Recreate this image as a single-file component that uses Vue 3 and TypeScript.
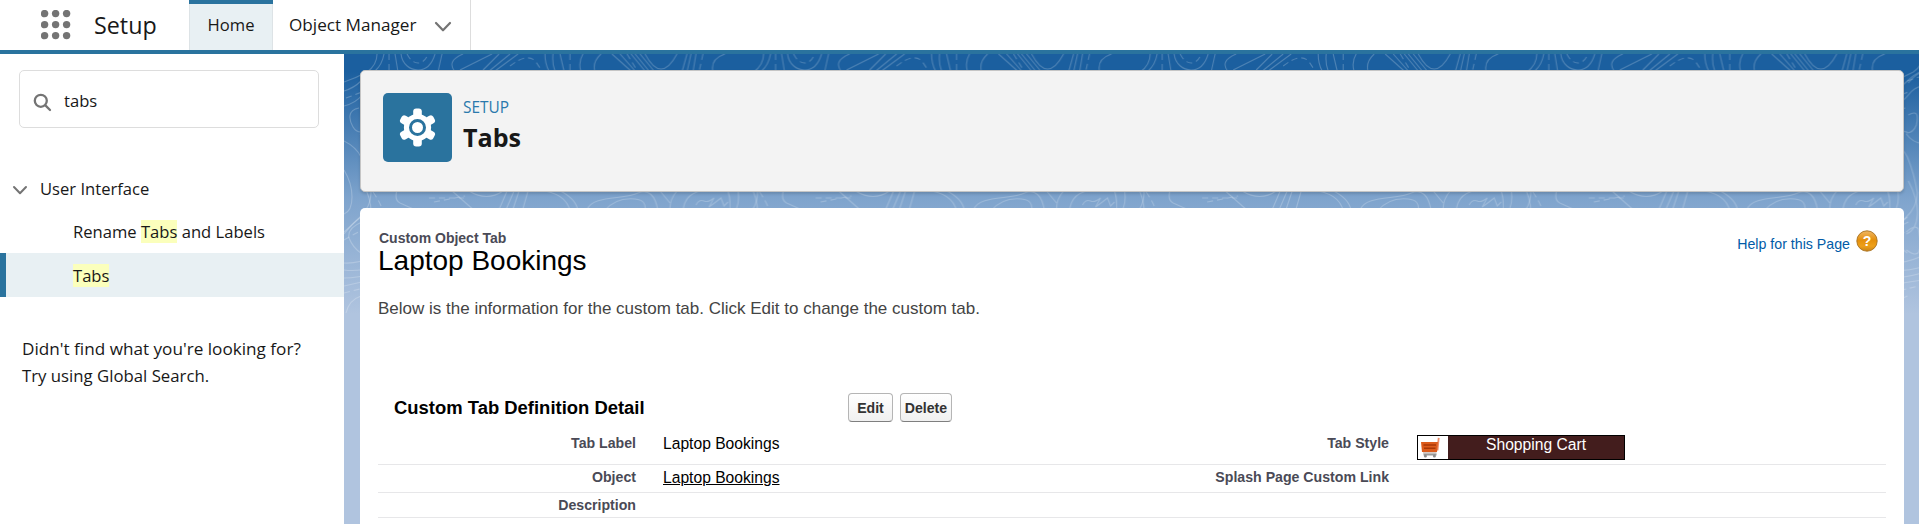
<script setup lang="ts">
interface Row {
  label: string
  value?: string
  link?: boolean
  rightLabel?: string
  style?: string
}

const rows: Row[] = [
  { label: 'Tab Label', value: 'Laptop Bookings', rightLabel: 'Tab Style', style: 'Shopping Cart' },
  { label: 'Object', value: 'Laptop Bookings', link: true, rightLabel: 'Splash Page Custom Link' },
  { label: 'Description' },
]
const dots = [3.6, 14.6, 25.6]
</script>

<template>
  <div class="app">
    <header class="topbar">
      <svg class="waffle" width="30" height="30" viewBox="0 0 30 30" fill="#747474">
        <template v-for="y in dots" :key="y">
          <circle v-for="x in dots" :key="x" :cx="x" :cy="y" r="3.7" />
        </template>
      </svg>
      <span class="app-name">Setup</span>
      <nav class="tabs">
        <a class="tab active"><span>Home</span></a>
        <a class="tab manager">
          <span>Object Manager</span>
          <svg width="18" height="12" viewBox="0 0 18 12" fill="none" stroke="#747474" stroke-width="2.2" stroke-linecap="round" stroke-linejoin="round"><path d="M2 2 L9 9.3 L16 2" /></svg>
        </a>
      </nav>
    </header>

    <div class="body">
      <aside class="sidebar">
        <div class="search">
          <svg width="19" height="19" viewBox="0 0 19 19" fill="none" stroke="#747474" stroke-width="2.3" stroke-linecap="round"><circle cx="7.8" cy="7.8" r="6" /><path d="M12.4 12.4 L17 17" /></svg>
          <span>tabs</span>
        </div>
        <div class="group">
          <svg width="16" height="11" viewBox="0 0 16 11" fill="none" stroke="#747474" stroke-width="2" stroke-linecap="round" stroke-linejoin="round"><path d="M2 2 L8 8.2 L14 2" /></svg>
          <span>User Interface</span>
        </div>
        <a class="item">Rename <mark>Tabs</mark> and Labels</a>
        <a class="item selected"><mark>Tabs</mark></a>
        <p class="hint"><span class="ask">Didn't find what you're looking for?</span><br />Try using Global Search.</p>
      </aside>

      <main class="main">
        <svg class="topo" width="1575" height="470">
          <defs>
            <pattern id="contours" width="386.6" height="470" patternUnits="userSpaceOnUse">
              <g fill="none" stroke="#fff" stroke-width="1.1" stroke-opacity=".22">
                <path d="M33 0 Q33 11 23 18 Q12 24 0 28 M40 0 Q38 11 31 17 M51 0 L54 18 M57 0 C58 10 66 16 74 16 S88 10 91 0 M98 0 L94 18 M119 0 Q102 7 111 18" />
                <path d="M45 0 V18 M63 0 C66 6 70 9 74 9 S82 6 84 0 M166 12 Q184 -2 192 8 L198 17 M226 0 V18 M283 0 L294 18 M359 0 L355 18" stroke-dasharray="6 4" />
                <path d="M148 0 L116 16 M155 0 L139 16 M166 0 L144 18 M174 0 L151 17 M201 0 Q201 10 205 17 M209 0 Q208 10 211 17 M216 0 L220 17 M239 0 Q234 8 237 18 M257 0 Q248 8 251 18 M268 0 L287 17 M276 0 L292 18 M287 0 L301 17 M291 0 L305 17 M296 0 L310 17 M301 0 Q317 30 333 0 M343 0 L338 18 M347 0 L343 18 M352 0 L349 18 M381 0 Q366 5 369 18" />
                <path d="M0 37 Q10 34 17 27 T32 17 M0 52 Q12 49 18 41 T32 32 M18 29 Q27 18 34 18 M16 80 Q24 91 36 89 M18 61 Q30 54 26 71 Q23 79 16 79 M15 54 C3 56 5 66 9 73 Q12 78 17 78 M0 87 Q12 93 17 103 Q24 120 27 139 Q27 153 15 164 L0 178" />
                <path d="M2 44 L18 38 M17 27 L32 22 M0 186 L16 177 M0 239 L32 231 M85 144 H120 M90 148 L121 142 M29 138 Q36 148 39 157" stroke-dasharray="6 4" />
                <path d="M0 116 Q8 129 8 143 T0 160 M18 127 Q28 146 27 161 T16 180 M0 180 Q9 169 17 163 M17 199 Q9 194 5 184 Q3 174 18 168 M16 196 Q35 210 28 175 Q25 170 16 178 M0 209 Q13 210 32 202 M0 216 Q13 218 32 213 M0 224 Q13 224 32 219 M0 232 Q15 228 32 226 M2 259 Q5 246 17 242" />
                <path d="M53 136 Q50 146 56 149 L76 158 M107 136 L132 158 M125 137 Q143 148 159 137 M163 137 L154 158 M170 137 L161 158 M175 137 L168 158 M184 137 L178 158 M195 136 Q222 139 226 157 M214 136 Q232 144 234 157 M243 156 C248 141 280 146 294 139 Q310 133 314 157 M260 157 Q272 143 291 145 Q303 146 301 157 M316 137 L326 149 M333 137 Q325 146 326 158 M339 158 Q340 137 364 136 M384 137 Q387 146 386 158 M352 151 Q355 145 360 147 Q364 149 370 144 L365 153 Q372 148 377 144 L380 152 L384 148" />
              </g>
            </pattern>
          </defs>
          <rect width="1575" height="470" fill="url(#contours)" />
        </svg>

        <section class="page-head">
          <span class="gear">
            <svg width="37" height="39" viewBox="-18.5 -19.5 37 39">
              <g fill="#fff">
                <circle r="13.6" />
                <rect v-for="a in [0, 60, 120, 180, 240, 300]" :key="a" x="-4.3" y="-19" width="8.6" height="12" rx="3" :transform="`rotate(${a})`" />
              </g>
              <circle r="7" fill="none" stroke="#2a739e" stroke-width="3" />
            </svg>
          </span>
          <div class="titles">
            <span class="eyebrow">SETUP</span>
            <h1>Tabs</h1>
          </div>
        </section>

        <section class="content">
          <div class="intro">
            <div>
              <div class="kind">Custom Object Tab</div>
              <h2>Laptop Bookings</h2>
            </div>
            <a class="help">
              <span>Help for this Page</span>
              <svg width="22" height="22" viewBox="0 0 22 22">
                <defs>
                  <linearGradient id="amber" x1="0" y1="0" x2="0" y2="1">
                    <stop offset="0" stop-color="#efb765" />
                    <stop offset=".45" stop-color="#e58f0b" />
                    <stop offset=".75" stop-color="#eea019" />
                    <stop offset="1" stop-color="#c98318" />
                  </linearGradient>
                </defs>
                <circle cx="11" cy="11" r="10.2" fill="url(#amber)" stroke="#a8711e" stroke-width=".9" />
                <text x="11" y="16" text-anchor="middle" class="qmark">?</text>
              </svg>
            </a>
          </div>
          <p class="desc">Below is the information for the custom tab. Click Edit to change the custom tab.</p>
          <div class="detail-head">
            <h3>Custom Tab Definition Detail</h3>
            <button class="edit">Edit</button>
            <button class="delete">Delete</button>
          </div>
          <div class="detail">
            <div v-for="row in rows" :key="row.label" class="row">
              <span class="label">{{ row.label }}</span>
              <span class="value"><span :class="{ link: row.link }">{{ row.value }}</span></span>
              <span class="label">{{ row.rightLabel }}</span>
              <span class="value style-cell">
                <span v-if="row.style" class="tab-style">
                  <span class="cart">
                    <svg width="22" height="22" viewBox="0 0 22 22">
                      <path d="M18.7 .8 L17.5 13.5" stroke="#ec8d68" stroke-width="1.8" fill="none" />
                      <path d="M1 5 H18 L17 15 H2 Z" fill="#dc5b1b" />
                      <path d="M3.5 8 H16 M4 11.3 H15.5" stroke="#a83707" stroke-width="1.6" />
                      <path d="M3 15.8 H16.5" stroke="#d6c8c2" stroke-width="1.5" />
                      <path d="M3.5 17.5 H16.5" stroke="#999" stroke-width="2" />
                      <circle cx="5.4" cy="19" r="1.5" fill="#8b8b8b" /><circle cx="14.4" cy="19" r="1.5" fill="#8b8b8b" />
                    </svg>
                  </span>
                  <span class="style-name">{{ row.style }}</span>
                </span>
              </span>
            </div>
          </div>
        </section>
      </main>
    </div>
  </div>
</template>

<style>
body { overflow: hidden; }
</style>

<style scoped>
* { box-sizing: border-box; }
.app {
  height: 524px;
  display: flex;
  flex-direction: column;
  overflow: hidden;
  background: #fff;
  color: #181818;
  font: 16.6px/24px "Open Sans", "Noto Sans", sans-serif;
}
.topbar {
  display: flex;
  height: 54px;
  flex: none;
  border-bottom: 4px solid #2a739e;
}
.waffle { margin: 10px 0 0 41px; }
.app-name { width: 95px; margin-left: 23px; font-size: 23.3px; line-height: 50px; }
.tabs { display: flex; }
.tab { display: flex; height: 50px; line-height: 49px; }
.tab.active {
  width: 84px;
  justify-content: center;
  border-top: 4px solid #2a739e;
  background: #e8f0f3;
  box-shadow: inset 1px 0 #dde3e6, inset -1px 0 #dde3e6;
  line-height: 41px;
}
.tab.manager { width: 198px; padding-left: 16px; border-right: 1px solid #ddd; font-size: 17.15px; }
.tab.manager svg { margin: 21px 0 0 18px; }
.body { display: flex; flex: 1; min-height: 0; }
.sidebar { width: 344px; flex: none; padding-top: 16px; }
.search {
  display: flex;
  width: 300px;
  height: 58px;
  margin: 0 0 48px 19px;
  padding: 22px 0 0 13px;
  border: 1px solid #ddd;
  border-radius: 5px;
}
.search span { margin: -4px 0 0 12px; }
.group { display: flex; height: 26px; padding-left: 12px; margin-bottom: 7px; }
.group svg { margin: 9px 12px 0 0; }
.group span { line-height: 26px; }
.item { display: block; height: 44px; padding-left: 73px; line-height: 45px; }
.item.selected { border-left: 6px solid #2a739e; padding-left: 67px; background: #e8f0f3; }
mark { background: #fbffbc; color: inherit; }
.hint { margin: 38px 0 0 22px; font-size: 16.75px; line-height: 27px; }
.ask { font-size: 17.15px; }
.main {
  position: relative;
  flex: 1;
  min-width: 0;
  padding: 16px 15px 0 16px;
  background: linear-gradient(#1b5f9f 0, #1b5f9f 18px, #7fa4cd 145px, #b0c4df 260px);
}
.topo { position: absolute; left: 0; top: 0; }
.page-head, .content { position: relative; }
.page-head {
  display: flex;
  height: 122px;
  padding: 22px;
  border: 1px solid #c5c5c5;
  border-radius: 5px;
  background: #f3f3f3;
  box-shadow: 0 2px 3px rgba(0, 0, 0, .14);
}
.gear {
  display: flex;
  align-items: center;
  justify-content: center;
  width: 69px;
  height: 69px;
  margin-right: 11px;
  border-radius: 5px;
  background: #2a739e;
}
.eyebrow { display: block; margin-top: 4px; font-size: 15.4px; line-height: 22px; color: #2a79ac; }
h1 { margin: 1px 0 0; font-size: 25.1px; line-height: 34px; font-weight: 700; }
.content {
  height: 420px;
  margin-top: 16px;
  padding: 22px 18px 0;
  border-radius: 5px;
  background: #fff;
  font-family: "Liberation Sans", Arial, sans-serif;
}
.intro { display: flex; justify-content: space-between; height: 67px; }
.kind { margin: 0 0 0 1px; font-size: 14px; line-height: 17px; font-weight: 700; color: #4a4a56; }
h2 { margin: 0; font-size: 28px; line-height: 28px; font-weight: 400; color: #000; }
.help { display: flex; margin-right: 8px; color: #015ba7; font-size: 14.2px; }
.help span { margin: 2px 6px 0 0; }
.qmark { fill: #fff; font: 700 14px "Liberation Sans", sans-serif; }
.desc { margin: 0; height: 96px; font-size: 17px; line-height: 24px; color: #444; }
.detail-head { display: flex; height: 35px; padding-left: 16px; }
h3 { width: 454px; margin: 0; font-size: 18.45px; line-height: 29px; font-weight: 700; color: #000; }
button {
  height: 29px;
  margin-right: 7px;
  padding: 0;
  border: 1px solid #b5b5b5;
  border-bottom-color: #7f7f7f;
  border-radius: 4px;
  background: linear-gradient(#fff, #f0f0f0);
  color: #333;
  font: 700 14.1px "Liberation Sans", Arial, sans-serif;
}
.edit { width: 45px; }
.delete { width: 52px; }
.row {
  display: grid;
  grid-template-columns: 258px 495px 258px 1fr;
  height: 28px;
  padding-top: 4px;
  border-bottom: 1px solid #e7e7e9;
  line-height: 18px;
}
.row:first-child { height: 37px; padding-top: 7px; }
.row:last-child { height: 25px; }
.label { text-align: right; font-size: 14.15px; line-height: 17px; font-weight: 700; color: #4a4a56; }
.value { padding-left: 27px; font-size: 15.65px; color: #000; }
.style-cell { padding-left: 28px; }
.link { text-decoration: underline; }
.tab-style {
  display: flex;
  width: 208px;
  height: 25px;
  border: 1px solid #000;
  background: #431d1d;
  color: #fff;
}
.cart { width: 30px; background: #fff; }
.cart svg { display: block; margin: 1px 0 0 2px; }
.style-name { flex: 1; text-align: center; line-height: 18px; }
</style>
